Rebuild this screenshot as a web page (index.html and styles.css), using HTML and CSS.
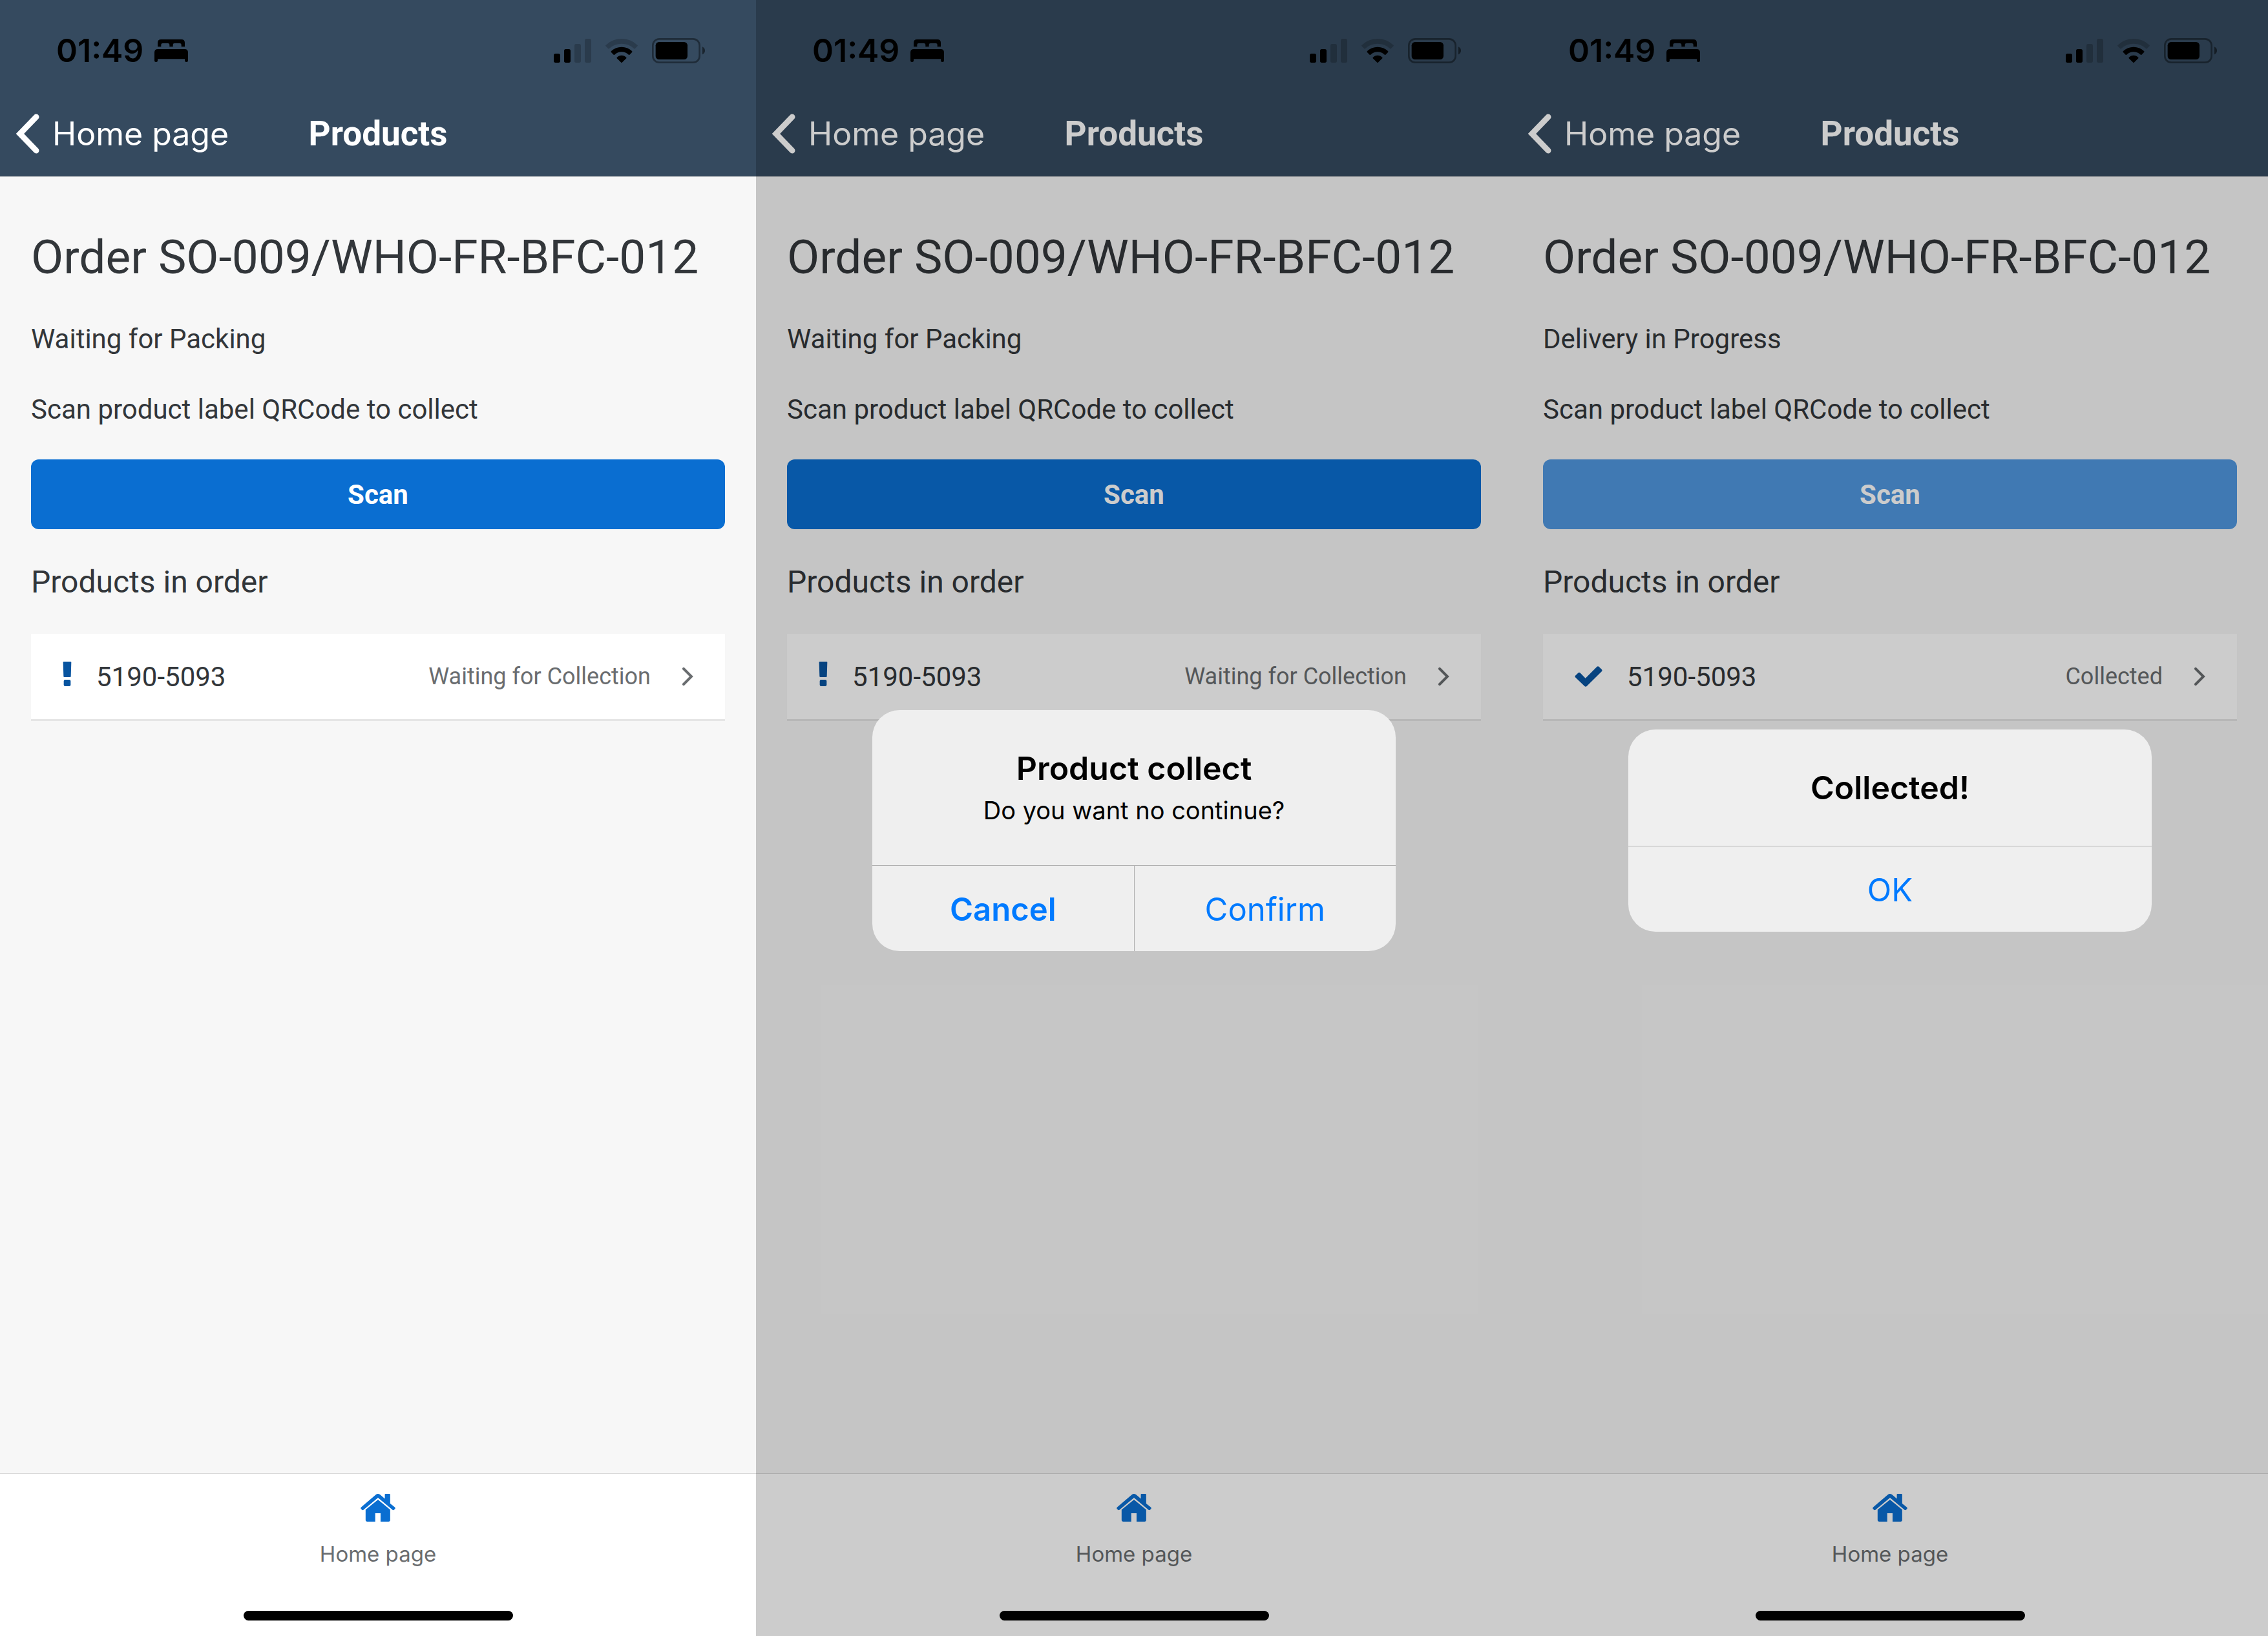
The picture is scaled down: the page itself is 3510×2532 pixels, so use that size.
FILE: index.html
```html
<!DOCTYPE html>
<html lang="en">
<head>
<meta charset="utf-8">
<meta name="viewport" content="width=device-width, initial-scale=1">
<title>Products</title>
<link rel="stylesheet" href="styles.css">
</head>
<body>
<svg class="sprite" aria-hidden="true">
  <symbol id="bed" viewBox="0 0 156 105">
    <path d="M15 34V16Q15 0 31 0H125Q141 0 141 16V34H125V25Q125 18 118 18H93Q86 18 86 25V34H70V25Q70 18 63 18H38Q31 18 31 25V34Z"/>
    <path d="M0 98V61Q0 45 16 45H140Q156 45 156 61V98Q156 105 149 105H148Q141 105 141 98V91H15V98Q15 105 8 105H7Q0 105 0 98Z"/>
  </symbol>
  <symbol id="signal" viewBox="0 0 174 111">
    <rect x="0" y="69" width="30" height="42" rx="8"/>
    <rect x="48" y="48" width="30" height="63" rx="8"/>
    <rect x="96" y="24" width="30" height="87" rx="8" opacity=".2"/>
    <rect x="144" y="0" width="30" height="111" rx="8" opacity=".2"/>
  </symbol>
  <symbol id="wifi" viewBox="0 0 150 111">
    <path d="M1 34Q-1 32 2 29Q32 0 75 0T148 29Q151 32 149 34L137 46Q135 48 132 45Q108 23 75 23T18 45Q15 48 13 46Z" opacity=".2"/>
    <path d="M27 63Q24 60 27 57Q48 38 75 38T123 57Q126 60 123 63L112 74Q109 76 106 73Q93 61 75 61T44 73Q41 76 38 74Z"/>
    <path d="M53 91Q51 88 54 86Q62 77 75 77T96 86Q99 88 97 91L77 110Q75 112 73 110Z"/>
  </symbol>
  <symbol id="battery" viewBox="0 0 246 117">
    <rect x="4" y="4" width="217" height="109" rx="30" fill="none" stroke="currentColor" stroke-width="8" opacity=".4"/>
    <rect x="17" y="18" width="148" height="81" rx="16"/>
    <path d="M234 40Q246 46 246 58T234 76Z" opacity=".5"/>
  </symbol>
  <symbol id="back" viewBox="0 0 37 62">
    <path d="M32 5L7 31L32 57" fill="none" stroke="currentColor" stroke-width="9" stroke-linecap="round" stroke-linejoin="miter"/>
  </symbol>
  <symbol id="next" viewBox="0 0 18 28">
    <path d="M2 2L14 14L2 26" fill="none" stroke="currentColor" stroke-width="4" stroke-linecap="round"/>
  </symbol>
  <symbol id="alert" viewBox="0 0 48 114">
    <path d="M5 3Q5 0 8 0H40Q43 0 43 3L41 68Q41 72 37 72H11Q7 72 7 68Z"/>
    <rect x="8" y="84" width="32" height="30" rx="6"/>
  </symbol>
  <symbol id="check" viewBox="0 0 135 96">
    <path d="M6 52Q3 48 6 44L20 31Q24 27 28 31L53 56L106 3Q111 -1 116 3L129 16Q132 20 129 24L59 93Q54 98 49 93Z"/>
  </symbol>
  <symbol id="house" viewBox="0 0 162 130">
    <path d="M1 70Q-1 66 2 63L71 4Q80 -4 91 4L113 23V3Q113 0 116 0H135Q138 0 138 3V45L160 63Q163 66 161 70L156 75Q152 78 149 75L81 18L13 75Q10 78 6 75Z"/>
    <path d="M81 27L138 74V122Q138 130 130 130H93V91H68V130H31Q23 130 23 122V74Z"/>
  </symbol>
</svg>

<main class="screens">
  <section class="screen">
    <header class="header">
      <div class="status-bar">
        <div class="clock"><time>01:49</time><svg class="icon-bed"><use href="#bed"/></svg></div>
        <div class="indicators">
          <svg class="icon-signal"><use href="#signal"/></svg>
          <svg class="icon-wifi"><use href="#wifi"/></svg>
          <svg class="icon-battery"><use href="#battery"/></svg>
        </div>
      </div>
      <nav class="nav">
        <a class="back" href="#home"><svg class="icon-back"><use href="#back"/></svg>Home page</a>
        <h1 class="nav-title">Products</h1>
      </nav>
    </header>
    <div class="content">
      <h2 class="order">Order SO-009/WHO-FR-BFC-012</h2>
      <p class="state">Waiting for Packing</p>
      <p class="hint">Scan product label QRCode to collect</p>
      <button class="scan" type="button">Scan</button>
      <h3 class="list-title">Products in order</h3>
      <ul class="list">
        <li><a class="row" href="#product"><svg class="icon-alert"><use href="#alert"/></svg><span class="sku">5190-5093</span><span class="row-state">Waiting for Collection</span><svg class="icon-next"><use href="#next"/></svg></a></li>
      </ul>
    </div>
    <footer class="tab-bar">
      <a class="tab" href="#home"><svg class="icon-house"><use href="#house"/></svg>Home page</a>
      <div class="home-indicator"></div>
    </footer>
  </section>

  <section class="screen">
    <header class="header">
      <div class="status-bar">
        <div class="clock"><time>01:49</time><svg class="icon-bed"><use href="#bed"/></svg></div>
        <div class="indicators">
          <svg class="icon-signal"><use href="#signal"/></svg>
          <svg class="icon-wifi"><use href="#wifi"/></svg>
          <svg class="icon-battery"><use href="#battery"/></svg>
        </div>
      </div>
      <nav class="nav">
        <a class="back" href="#home"><svg class="icon-back"><use href="#back"/></svg>Home page</a>
        <h1 class="nav-title">Products</h1>
      </nav>
    </header>
    <div class="content">
      <h2 class="order">Order SO-009/WHO-FR-BFC-012</h2>
      <p class="state">Waiting for Packing</p>
      <p class="hint">Scan product label QRCode to collect</p>
      <button class="scan" type="button">Scan</button>
      <h3 class="list-title">Products in order</h3>
      <ul class="list">
        <li><a class="row" href="#product"><svg class="icon-alert"><use href="#alert"/></svg><span class="sku">5190-5093</span><span class="row-state">Waiting for Collection</span><svg class="icon-next"><use href="#next"/></svg></a></li>
      </ul>
    </div>
    <footer class="tab-bar">
      <a class="tab" href="#home"><svg class="icon-house"><use href="#house"/></svg>Home page</a>
      <div class="home-indicator"></div>
    </footer>
    <div class="overlay">
      <dialog class="alert" open aria-labelledby="collect-title">
        <div class="alert-body">
          <h2 class="alert-title" id="collect-title">Product collect</h2>
          <p class="alert-message">Do you want no continue?</p>
        </div>
        <div class="alert-actions">
          <button class="alert-button preferred" type="button">Cancel</button>
          <button class="alert-button" type="button">Confirm</button>
        </div>
      </dialog>
    </div>
  </section>

  <section class="screen">
    <header class="header">
      <div class="status-bar">
        <div class="clock"><time>01:49</time><svg class="icon-bed"><use href="#bed"/></svg></div>
        <div class="indicators">
          <svg class="icon-signal"><use href="#signal"/></svg>
          <svg class="icon-wifi"><use href="#wifi"/></svg>
          <svg class="icon-battery"><use href="#battery"/></svg>
        </div>
      </div>
      <nav class="nav">
        <a class="back" href="#home"><svg class="icon-back"><use href="#back"/></svg>Home page</a>
        <h1 class="nav-title">Products</h1>
      </nav>
    </header>
    <div class="content">
      <h2 class="order">Order SO-009/WHO-FR-BFC-012</h2>
      <p class="state">Delivery in Progress</p>
      <p class="hint">Scan product label QRCode to collect</p>
      <button class="scan" type="button" disabled>Scan</button>
      <h3 class="list-title">Products in order</h3>
      <ul class="list">
        <li><a class="row" href="#product"><svg class="icon-check"><use href="#check"/></svg><span class="sku">5190-5093</span><span class="row-state">Collected</span><svg class="icon-next"><use href="#next"/></svg></a></li>
      </ul>
    </div>
    <footer class="tab-bar">
      <a class="tab" href="#home"><svg class="icon-house"><use href="#house"/></svg>Home page</a>
      <div class="home-indicator"></div>
    </footer>
    <div class="overlay">
      <dialog class="alert" open aria-labelledby="done-title">
        <div class="alert-body">
          <h2 class="alert-title" id="done-title">Collected!</h2>
        </div>
        <div class="alert-actions">
          <button class="alert-button" type="button">OK</button>
        </div>
      </dialog>
    </div>
  </section>
</main>
</body>
</html>
```
FILE: styles.css
```css
:root {
  --app-font: Roboto, "Noto Sans", sans-serif;
  --system-font: Inter, "Liberation Sans", sans-serif;
  --brand: #0a6ed1;
  --text: #32363a;
  --muted: #6a6d70;
}

* {
  box-sizing: border-box;
}

body {
  margin: 0;
  font-family: var(--app-font);
  color: var(--text);
}

h1, h2, h3, p, ul {
  margin: 0;
  padding: 0;
  font-weight: 400;
}

ul {
  list-style: none;
}

a {
  color: inherit;
  text-decoration: none;
}

button {
  border: 0;
  padding: 0;
  font: inherit;
}

svg {
  display: block;
  flex: none;
  fill: currentColor;
}

.sprite {
  position: absolute;
  width: 0;
  height: 0;
}

.screens {
  display: grid;
  grid-template-columns: repeat(3, 1fr);
  min-height: 100vh;
}

.screen {
  position: relative;
  display: flex;
  flex-direction: column;
  background: #f7f7f7;
}

/* Header */

.header {
  background: #354a5f;
  border-bottom: 1px solid #d9d9d9;
  color: #fff;
}

.status-bar {
  display: flex;
  justify-content: space-between;
  align-items: center;
  padding: 42px 79px 27px 87px;
  color: #000;
  font: 600 50px/72px var(--system-font);
}

.clock {
  display: flex;
  align-items: center;
  gap: 17px;
}

.indicators {
  display: flex;
  align-items: center;
  gap: 22px;
}

.icon-bed { width: 52px; height: 35px; }
.icon-signal { width: 58px; height: 37px; }
.icon-wifi { width: 50px; height: 37px; }
.icon-battery { width: 82px; height: 39px; }

.nav {
  display: grid;
  grid-template-columns: 1fr auto 1fr;
  align-items: center;
  height: 132px;
}

.back {
  display: flex;
  align-items: center;
  gap: 20px;
  padding-left: 24px;
  font: 400 50px/60px var(--system-font);
}

.icon-back { width: 37px; height: 62px; }

.nav-title {
  font-size: 53px;
  font-weight: 700;
  line-height: 60px;
}

/* Order */

.content {
  flex: 1;
  display: flex;
  flex-direction: column;
  padding: 82px 48px;
}

.order {
  font-size: 73px;
  line-height: 84px;
}

.state,
.hint {
  margin-top: 61px;
  font-size: 42px;
  line-height: 48px;
}

.scan {
  margin-top: 53px;
  height: 108px;
  border-radius: 12px;
  background: var(--brand);
  color: #fff;
  font-size: 42px;
  font-weight: 700;
}

.scan:disabled {
  background: #5098e0;
  color: #fff;
}

.list-title {
  margin-top: 54px;
  font-size: 48px;
  line-height: 56px;
}

.list {
  margin-top: 52px;
}

.row {
  display: flex;
  align-items: center;
  gap: 37px;
  height: 135px;
  padding: 0 48px;
  background: #fff;
  border-bottom: 3px solid #e5e5e5;
  font-size: 42px;
}

.icon-alert { width: 16px; height: 38px; margin-bottom: 8px; color: #0854a0; }
.icon-check { width: 45px; height: 32px; color: #0854a0; }
.icon-next { width: 18px; height: 28px; color: var(--muted); }

.row-state {
  margin-left: auto;
  margin-right: 12px;
  color: var(--muted);
  font-size: 36px;
}

/* Tab bar */

.tab-bar {
  display: flex;
  flex-direction: column;
  align-items: center;
  gap: 68px;
  padding: 31px 0 24px;
  background: #fff;
  border-top: 1px solid #d9d9d9;
}

.tab {
  display: flex;
  flex-direction: column;
  align-items: center;
  gap: 30px;
  color: var(--muted);
  font: 400 33px/40px var(--system-font);
}

.icon-house { width: 54px; height: 43px; color: var(--brand); }

.home-indicator {
  width: 417px;
  height: 15px;
  border-radius: 8px;
  background: #000;
}

/* Alerts */

.overlay {
  position: absolute;
  inset: 0;
  display: grid;
  place-items: center;
  padding-top: 39px;
  background: rgba(0, 0, 0, .2);
}

.alert {
  position: static;
  width: 810px;
  margin: 0;
  padding: 0;
  border: 0;
  border-radius: 42px;
  overflow: hidden;
  background: #efefef;
  color: #000;
  font-family: var(--system-font);
  text-align: center;
}

.alert-body {
  padding: 60px 48px;
}

.alert-title {
  font-size: 50px;
  font-weight: 600;
  line-height: 60px;
}

.alert-message {
  margin-top: 10px;
  font-size: 38px;
  line-height: 50px;
}

.alert-actions {
  display: flex;
  border-top: 1px solid #b0b0b0;
}

.alert-button {
  flex: 1;
  height: 132px;
  padding-top: 2px;
  background: transparent;
  color: #007aff;
  font-size: 49px;
}

.alert-button + .alert-button {
  border-left: 1px solid #b0b0b0;
}

.preferred {
  font-weight: 600;
}
```
